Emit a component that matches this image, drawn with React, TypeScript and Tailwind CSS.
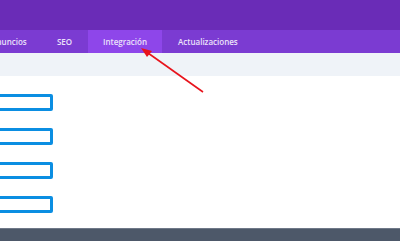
import React from "react";

export default function App() {
  const font = { fontFamily: '"Open Sans", "Liberation Sans", sans-serif' };
  return (
    <div className="relative w-[400px] h-[241px] overflow-hidden bg-white" style={font}>
      <div className="h-[30px] bg-[#6a2cb7]" />
      <div className="h-[23px] bg-[#7b3bd2] flex items-stretch text-[8px] font-semibold text-[#ece2fa]">
        <div className="ml-[-23px] w-[64px] flex items-center justify-center">Anuncios</div>
        <div className="w-[47px] flex items-center justify-center">SEO</div>
        <div className="w-[74px] flex items-center justify-center bg-[#8e46ea]">Integración</div>
        <div className="pl-[16px] flex items-center">Actualizaciones</div>
      </div>
      <div className="h-[23px] bg-[#eff3f8]" />
      <div className="h-[152px] flex flex-col gap-[17px] pt-[18px]">
        {[0, 1, 2, 3].map((i) => (
          <div
            key={i}
            className="ml-[-6px] w-[59px] h-[17px] border-[3px] border-[#0b8ee2] rounded-[2px] bg-white"
          />
        ))}
      </div>
      <div className="h-[13px] bg-[#4d5869] border-t border-[#6f7888]" />
      <svg className="absolute left-0 top-0" width="400" height="241" viewBox="0 0 400 241">
        <line x1="203" y1="92" x2="148" y2="53" stroke="#e8131c" strokeWidth="1.6" />
        <polygon points="141,48 152,51 147,57" fill="#e8131c" />
      </svg>
    </div>
  );
}
